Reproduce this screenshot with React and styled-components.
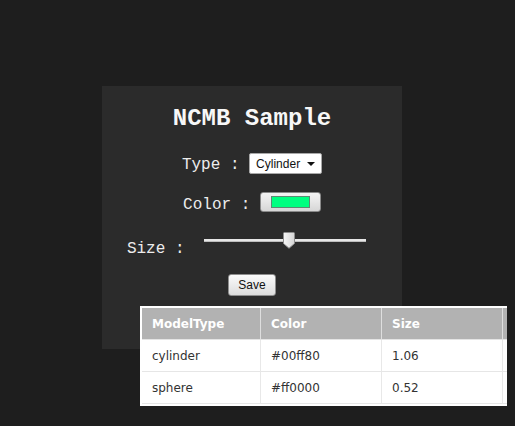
import React from 'react';
import styled, {createGlobalStyle} from 'styled-components';

const GlobalStyle = createGlobalStyle`
	html, body {
		margin: 0;
		padding: 0;
		background: #1e1e1e;
	}
`;

const MONO = `'Liberation Mono', 'Courier New', monospace`;
const UI = `'Liberation Sans', Arial, sans-serif`;
const TABLE_FONT = `'DejaVu Sans', Verdana, sans-serif`;

const Page = styled.div`
	position: relative;
	width: 515px;
	height: 426px;
	overflow: hidden;
	padding: 86px 0 0 102px;
	box-sizing: border-box;
`;

const Panel = styled.div`
	width: 300px;
	height: 263px;
	box-sizing: border-box;
	padding-top: 18px;
	background: #2b2b2b;
`;

const Title = styled.h1`
	margin: 0;
	font-family: ${MONO};
	font-size: 24px;
	font-weight: bold;
	line-height: 30px;
	color: #f7f7f7;
	text-align: center;
`;

const Row = styled.div`
	display: flex;
	justify-content: center;
	align-items: flex-start;
	height: ${(p) => p.$h}px;
	margin-top: ${(p) => p.$gap}px;
`;

const Label = styled.span`
	font-family: ${MONO};
	font-size: 16px;
	line-height: 20px;
	color: #ededed;
	white-space: pre;
	margin-top: ${(p) => p.$dy || 0}px;
`;

const SelectBox = styled.div`
	display: flex;
	align-items: center;
	justify-content: space-between;
	width: 73px;
	height: 21px;
	box-sizing: border-box;
	padding: 0 6px 0 6px;
	background: #fff;
	border: 1px solid #a8a8a8;
	border-radius: 2px;
	font-family: ${UI};
	font-size: 12px;
	color: #111;
`;

const Caret = styled.span`
	width: 0;
	height: 0;
	border-left: 4px solid transparent;
	border-right: 4px solid transparent;
	border-top: 4px solid #111;
`;

const ColorButton = styled.div`
	display: flex;
	align-items: center;
	justify-content: center;
	width: 61px;
	height: 20px;
	box-sizing: border-box;
	border: 1px solid #8a8a8a;
	border-radius: 3px;
	background: linear-gradient(#f4f4f4, #e6e6e6 50%, #d6d6d6);
`;

const Swatch = styled.span`
	width: 39px;
	height: 12px;
	box-sizing: border-box;
	border: 1px solid #5d8a73;
	background: ${(p) => p.$color};
`;

const Slider = styled.div`
	position: relative;
	width: 183px;
	height: 16px;
`;

const Track = styled.div`
	margin: 7px 11px 0 10px;
	height: 3px;
	background: #e6e6e6;
	border-bottom: 1px solid #bdbdbd;
	box-sizing: border-box;
`;

const Thumb = styled.svg`
	position: absolute;
	top: 0;
`;

const SaveButton = styled.button`
	width: 48px;
	height: 22px;
	padding: 0;
	box-sizing: border-box;
	border: 1px solid #8e8e8e;
	border-radius: 3px;
	background: linear-gradient(#fbfbfb, #ececec 50%, #dcdcdc);
	font-family: ${UI};
	font-size: 12px;
	color: #111;
`;

const TableFrame = styled.div`
	position: absolute;
	left: 140px;
	top: 306px;
	width: 367px;
	height: 100px;
	box-sizing: border-box;
	padding: 2px 0 0 2px;
	background: #fff;
	overflow: hidden;
`;

const Table = styled.table`
	width: 484px;
	table-layout: fixed;
	border-collapse: separate;
	border-spacing: 0;
	font-family: ${TABLE_FONT};
	font-size: 12px;
`;

const Th = styled.th`
	height: 31px;
	padding: 0 10px;
	text-align: left;
	font-weight: bold;
	color: #fff;
	background: #b2b2b2;
	border-right: 1px solid #dedede;
	border-bottom: 1px solid #e4e4e4;
`;

const Td = styled.td`
	height: 31px;
	padding: 0 10px;
	color: #333;
	border-right: 1px solid #e8e8e8;
	border-bottom: 1px solid #e6e6e6;
`;

const models = [
	{type: 'cylinder', color: '#00ff80', size: '1.06'},
	{type: 'sphere', color: '#ff0000', size: '0.52'},
];

const columnWidths = [119, 121, 121, 123];

const SIZE_VALUE = 0.525;

const App = () => {
	return (
		<>
			<GlobalStyle />
			<Page>
				<Panel>
					<Title>NCMB Sample</Title>
					<Row $h={21} $gap={19}>
						<Label $dy={2}>Type : </Label>
						<SelectBox>
							Cylinder
							<Caret />
						</SelectBox>
					</Row>
					<Row $h={20} $gap={18}>
						<Label $dy={3}>Color : </Label>
						<ColorButton>
							<Swatch $color='#00ff80' />
						</ColorButton>
					</Row>
					<Row $h={16} $gap={20}>
						<Label $dy={7}>Size : </Label>
						<Slider>
							<Track />
							<Thumb
								width='12'
								height='17'
								viewBox='0 0 12 17'
								style={{left: `${10 + SIZE_VALUE * 162 - 6}px`}}
							>
								<defs>
									<linearGradient id='thumbFill' x1='0' x2='1'>
										<stop offset='0' stopColor='#f6f6f6' />
										<stop offset='1' stopColor='#d4d4d4' />
									</linearGradient>
								</defs>
								<path
									d='M0.5 1.5 Q0.5 0.5 1.5 0.5 L10.5 0.5 Q11.5 0.5 11.5 1.5 L11.5 11.5 L6 16.3 L0.5 11.5 Z'
									fill='url(#thumbFill)'
									stroke='#8c8c8c'
								/>
							</Thumb>
						</Slider>
					</Row>
					<Row $h={22} $gap={26}>
						<SaveButton>Save</SaveButton>
					</Row>
				</Panel>
				<TableFrame>
					<Table>
						<colgroup>
							{columnWidths.map((w, i) => (
								<col key={i} style={{width: `${w}px`}} />
							))}
						</colgroup>
						<thead>
							<tr>
								<Th>ModelType</Th>
								<Th>Color</Th>
								<Th>Size</Th>
								<Th />
							</tr>
						</thead>
						<tbody>
							{models.map((m) => (
								<tr key={m.type}>
									<Td>{m.type}</Td>
									<Td>{m.color}</Td>
									<Td>{m.size}</Td>
									<Td />
								</tr>
							))}
						</tbody>
					</Table>
				</TableFrame>
			</Page>
		</>
	);
};

export default App;
